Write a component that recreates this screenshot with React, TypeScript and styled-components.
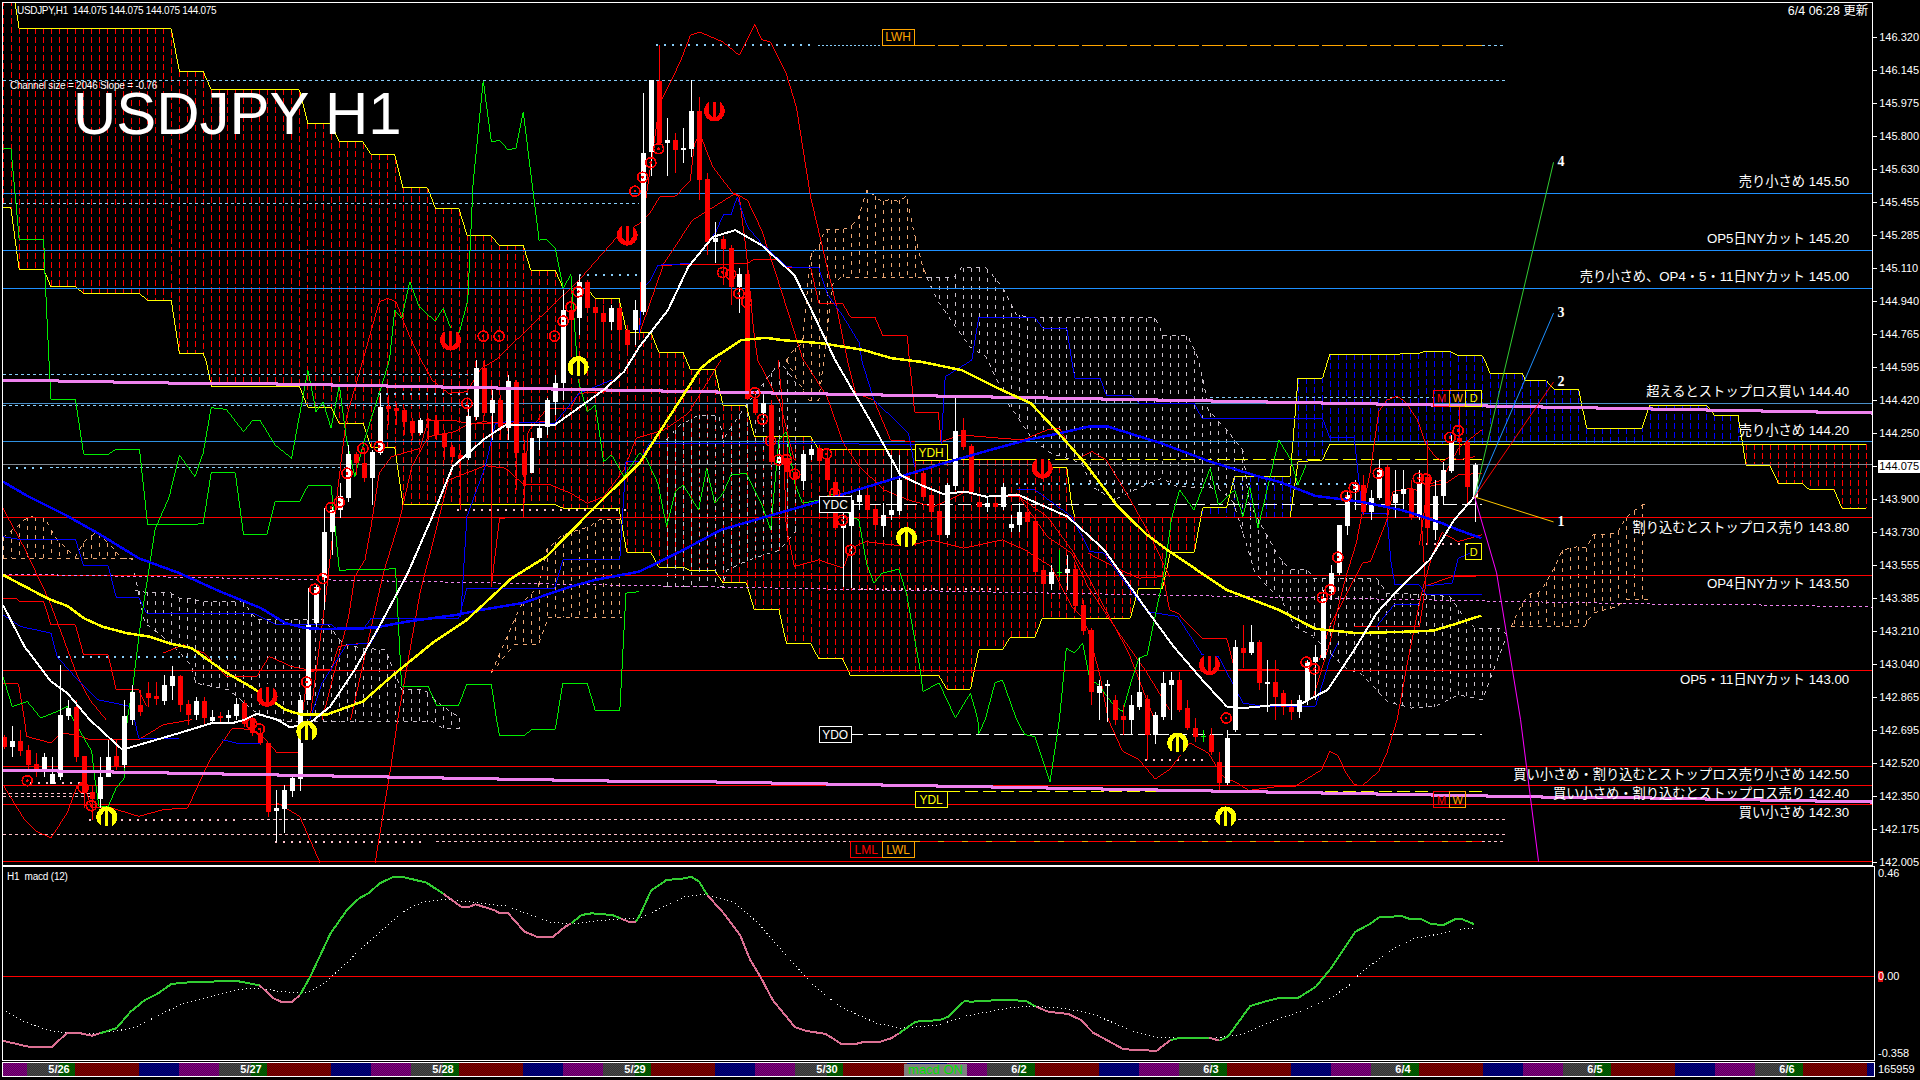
import React from 'react';
import styled, { createGlobalStyle } from 'styled-components';

type Pt = [number, number];
type Candle = [number, number, number, number, 'w' | 'r' | 'g'];

// traced from 640x360 tiles of the chart, tile px are 2.45x wide and 3x tall
const tile = (col: number, row: number, v: number[]): Pt[] => {
  const out: Pt[] = [];
  for (let i = 0; i < v.length; i += 2) {
    out.push([col * 640 + v[i] / 2.45, row * 360 + v[i + 1] / 3]);
  }
  return out;
};
const toPath = (pts: Pt[]) =>
  pts.map((p, i) => `${i ? 'L' : 'M'}${p[0].toFixed(1)} ${p[1].toFixed(1)}`).join('');
const yAt = (pts: Pt[], x: number) => {
  if (x <= pts[0][0]) return pts[0][1];
  for (let i = 1; i < pts.length; i++) {
    if (x <= pts[i][0] && pts[i][0] > pts[i - 1][0]) {
      const k = (x - pts[i - 1][0]) / (pts[i][0] - pts[i - 1][0]);
      return pts[i - 1][1] + k * (pts[i][1] - pts[i - 1][1]);
    }
  }
  return pts[pts.length - 1][1];
};
const barXs = (from: number, to: number) => {
  const xs: number[] = [];
  for (let x = 4; x <= 1868; x += 8) if (x >= from && x <= to) xs.push(x);
  return xs;
};
const stairs = (y0: number, y1: number) => {
  const pts: Pt[] = [];
  for (let x = 3, i = 0; x < 1874; x += 55, i++) {
    const y = y0 + ((y1 - y0) * x) / 1871;
    pts.push([x, y], [x + 55, y]);
  }
  return pts;
};

const w = (a: number, b: number, c = a - 5, d = b + 5): Candle => [a, b, c, d, 'w'];
const r = (a: number, b: number, c = a - 5, d = b + 5): Candle => [a, b, c, d, 'r'];
const g = (a: number, c: number, d: number): Candle => [a, a + 1, c, d, 'g'];

const CANDLES: Candle[] = [
  r(737,747,735,749),w(741,747,726,757),r(741,751,730,756),r(750,765,745,770),r(764,769,753,777),w(757,769,753,777),w(774,784,757,784),w(715,777,665,780),
  w(708,716,700,720),r(707,757,700,762),r(756,793,756,808),r(792,799,785,820),w(777,799,757,808),w(757,777,740,777),r(756,767,740,770),w(716,765,700,768),
  w(692,720,685,725),r(705,712,690,716),r(693,698,682,707),r(696,699,682,705),w(685,701,675,705),w(676,686,666,700),r(676,705,675,712),r(704,715,700,725),
  w(701,715,697,720),r(701,718,697,725),w(717,721,710,724),r(716,718,712,722),w(715,718,710,722),w(704,716,698,720),r(703,724,700,727),r(718,733,715,736),
  r(733,743,728,745),r(743,812,743,817),w(808,811,790,842),w(790,809,785,833),w(778,791,776,797),w(700,779,695,791),w(625,700,588,700),w(587,623,585,628),
  w(532,578,508,610),w(510,532,507,555),w(496,510,483,518),w(454,498,445,502),r(454,463,452,475),r(463,478,448,482),w(452,478,450,505),w(407,453,393,455),
  r(406,409,395,425),r(408,411,403,425),r(410,422,408,435),r(421,433,418,440),w(420,433,418,435),r(419,421,418,440),r(421,435,415,440),r(434,447,430,460),
  r(447,457,445,462),r(455,459,450,510),w(416,458,405,460),w(368,417,360,420),r(368,413,360,416),w(400,413,390,440),r(400,427,395,440),w(381,428,375,440),
  r(382,453,380,490),r(453,475,440,500),w(438,473,435,483),w(428,438,425,450),w(400,427,398,435),w(383,402,375,415),w(310,383,290,400),r(310,320,300,355),
  w(282,318,275,335),r(282,308,280,310),r(307,313,300,340),r(313,322,305,345),w(308,322,305,330),r(308,330,305,345),r(330,345,325,355),w(310,330,300,345),
  w(153,312,93,315),w(80,152,80,176),r(81,143,45,145),w(140,143,118,176),r(140,150,133,173),w(148,150,128,163),w(111,149,80,157),r(111,180,97,200),
  r(179,242,173,255),w(238,242,222,263),r(239,249,236,285),r(248,287,245,305),w(274,287,268,313),r(274,399,270,400),r(399,413,395,415),w(403,413,395,427),
  r(405,462,400,465),w(457,463,450,470),r(458,472,450,475),r(472,478,465,490),w(454,481,450,490),w(449,455,445,460),r(448,461,445,470),r(458,480,455,490),
  r(482,528,478,530),w(525,528,512,587),w(500,526,495,588),w(495,502,490,510),r(495,510,490,515),r(509,525,505,530),w(515,526,503,537),w(510,515,455,520),
  w(480,511,455,515),r(476,480,465,500),r(472,474,460,490),r(473,497,470,500),r(495,512,490,520),r(511,535,490,585),w(485,535,483,538),w(431,486,397,490),
  r(430,447,418,450),r(446,492,444,495),r(502,507,495,525),w(503,507,498,512),r(503,507,498,512),w(487,507,483,510),w(524,528,515,532),w(512,525,503,532),
  r(512,522,502,532),r(521,572,518,575),r(570,584,565,615),w(572,584,565,590),g(572,550,577),w(569,573,555,590),r(569,606,565,610),r(605,631,600,635),
  r(630,692,628,705),w(686,693,680,720),w(684,686,680,722),r(700,720,695,725),r(716,720,705,735),w(705,720,695,735),w(692,707,658,710),r(699,735,695,760),
  w(715,735,712,744),w(683,717,672,720),w(680,685,672,720),r(680,710,672,712),r(708,728,700,730),r(728,737,718,742),g(736,730,742),r(735,752,728,755),
  r(762,783,752,792),w(738,783,730,785),w(647,730,640,732),r(648,653,625,668),w(642,653,625,655),r(642,683,640,690),w(682,684,660,712),r(682,697,660,720),
  r(693,707,690,715),r(707,712,700,720),w(700,712,695,718),w(662,700,660,705),w(657,662,645,700),w(598,658,590,660),w(573,592,565,600),w(525,573,525,575),
  w(495,526,490,535),w(485,490,480,510),r(485,512,475,515),w(498,512,490,520),w(470,498,460,500),r(467,506,465,520),w(494,503,470,518),w(489,494,470,510),
  r(489,517,480,520),w(482,517,470,520),r(477,528,440,545),w(496,530,480,540),w(470,496,462,505),w(442,471,435,473),r(438,442,405,455),r(442,487,440,505),
  w(465,497,463,522),
];

const SPAN_U: Pt[] = [
  ...tile(0,0,[36,0,47,85,420,85,440,213,498,213,518,268,734,268,755,370,812,370,832,425,890,425,910,463,968,463,988,562,1048,562,1068,625,1126,625,1146,706,1204,706,1224,736,1283,736,1302,811,1362,811,1381,865,1440,865,1459,895,1518,895,1537,997,1568,997]),
  ...tile(1,0,[28,997,48,1057,107,1057,115,1080]),
  ...tile(1,1,[125,28,185,28,205,135,262,135,282,230,420,230,440,270,735,270,755,300,975,300,990,322,1048,322,1060,435,1068,472,1568,472]),
  ...tile(2,1,[28,472,47,305,107,300,125,253,1440,253]),
];
const SPAN_L: Pt[] = [
  ...tile(0,0,[7,622,27,622,47,808,107,808,125,860,185,860,205,880,342,880,362,901,420,901,440,1060,498,1060,505,1080]),
  ...tile(0,1,[518,78,734,78,755,142,812,142,832,190,890,190,910,262,968,262,988,435,1362,435,1381,445,1518,445,1537,577,1568,577]),
  ...tile(1,1,[28,577,47,622,107,622,125,632,185,632,205,668,262,668,282,750,342,750,361,852,420,852,440,897,498,897,518,948,734,948,754,988,812,988,832,870,890,870,910,832,970,832,988,775,1204,775,1224,685,1283,685,1302,577,1361,577,1381,443,1440,443,1459,349,1568,349]),
  ...tile(2,1,[28,349,47,55,107,55]),
  ...tile(2,0,[125,1063,270,1063,345,1060,355,1055,420,1055,440,1067,498,1067,505,1080]),
  ...tile(2,1,[518,40,597,40,605,62,656,62,675,87,735,87,755,205,890,205,910,135,1048,135,1068,165,1126,165,1146,318,1205,318,1225,370,1283,370,1302,390,1362,390,1381,445,1440,445]),
];

const PEACH = '#eca673';
const PALE = '#c9bfc9';
const SOFT_CLOUDS: { top: Pt[]; bottom: Pt[]; color: string }[] = [
  { color: PEACH,
    top: tile(0,1,[7,535,40,500,70,470,110,475,140,540,185,590,210,540,240,515,265,550,300,595,325,600]),
    bottom: tile(0,1,[7,595,325,595]) },
  { color: PALE,
    top: tile(0,1,[330,690,355,697,415,697,440,715,475,717,490,725,595,725,630,780,795,780,840,850,885,865,945,870,985,990,1040,990,1085,1040,1130,1075]),
    bottom: tile(0,1,[330,640,355,790,420,850,470,920,480,970,560,990,630,1060,700,1085,850,1085,945,1085,985,1085,1060,1085,1085,1105,1130,1105]) },
  { color: PEACH,
    top: tile(0,1,[1205,940,1240,840,1280,730,1320,680,1340,570,1380,525,1445,500,1470,480,1525,480]),
    bottom: tile(0,1,[1205,940,1260,855,1320,855,1345,772,1525,772]) },
  { color: PALE,
    top: tile(1,1,[65,240,100,195,145,165,195,168,205,240,262,135,345,5,385,70]),
    bottom: tile(1,1,[65,680,205,680,215,630,270,600,345,570,385,510]) },
  { color: PEACH,
    top: tile(1,0,[360,1080,385,1040,400,1030,420,760,440,742,455,688,500,688,515,680,535,660,558,568,575,585,595,605,615,598,635,603,655,588,672,690,695,800,705,832]),
    bottom: tile(1,0,[360,1080,415,1200,440,1200,475,850,495,832,705,832]) },
  { color: PALE,
    top: [...tile(1,0,[705,832,770,832,790,803,850,803,870,830,890,860,925,945,970,953,1265,953,1285,1007,1345,1007,1370,1075]),
      ...tile(1,1,[1385,75,1395,150,1440,210,1480,270,1495,430,1568,590])],
    bottom: [...tile(1,0,[705,832,730,900,810,1040,850,1070]),
      ...tile(1,1,[900,120,965,240,1010,280,1085,310,1110,380,1165,420,1205,395,1280,355,1320,380,1420,385,1455,425,1470,480,1510,640,1560,705])] },
  { color: PALE,
    top: tile(2,1,[0,590,28,630,70,630,85,655,240,655,265,700,340,703,420,710,450,765,480,805,540,805,560,825]),
    bottom: tile(2,1,[0,705,40,800,85,830,125,880,165,925,205,945,265,1025,325,1045,385,1040,440,1005,500,1020,530,920,560,825]) },
  { color: PEACH,
    top: tile(2,1,[570,800,597,730,615,702,635,702,655,670,675,625,695,570,735,560,755,565,770,525,830,520,850,475,890,435,910,430]),
    bottom: tile(2,1,[570,800,750,800,770,760,830,740,850,720,910,718]) },
];

const THIN_RED: Pt[][] = [
  [...tile(0,1,[760,1080,800,700,830,370,850,170,890,0]),...tile(0,0,[930,905,950,895,972,905,985,950,1005,1010,1030,1075]),...tile(0,1,[1060,60,1100,100,1145,95,1180,25,1215,0]),...tile(0,0,[1420,840,1510,715,1568,670]),...tile(1,0,[25,640,50,590,90,587,125,540,135,430,148,400,180,500,230,580,245,590,262,750,280,990,290,1080]),...tile(1,1,[345,130,380,300])],
  [...tile(1,0,[0,1020,8,660,50,310,100,185,125,105,148,95,205,125,245,165,283,72,300,118,322,125,360,220,385,320,420,590,460,800,480,900,510,1080]),...tile(1,1,[530,100,575,120,616,240,675,245])],
  [...tile(1,0,[0,1000,60,790,130,660,235,580,265,600,300,690,345,860,400,1075]),...tile(1,1,[460,110,500,250,540,320,600,390,660,420,720,440,760,420,800,395,850,410,930,410,1000,470,1060,570,1100,650,1200,880,1260,1070])],
  [...tile(1,0,[48,795,195,793,265,790,280,778,340,778,362,802,420,802,440,910,498,910,518,952,578,952,597,1007,657,1007,662,1080]),...tile(1,1,[675,157,733,157,740,245,790,225,940,240,1000,210,1030,205,1060,270])],
  [...tile(1,1,[340,0,350,120,360,500,380,620,440,600,500,625,518,565,555,545,655,560,715,540,795,565,890,540,945,570,1010,620,1060,740,1085,770,1100,810,1130,950,1150,1080]),...tile(1,2,[1185,95,1225,120,1265,178,1300,150,1350,70,1395,100,1430,170,1465,190,1495,212,1568,200]),...tile(2,2,[40,200,105,150,125,95,145,108,165,160,185,195,205,198,245,155,265,100,290,0]),...tile(2,1,[320,880,350,700,375,590,400,518,440,545,497,525])],
  tile(0,1,[7,445,60,565,120,720,175,900,190,950,220,1020,260,1080]),
  tile(0,1,[7,715,40,715,47,725,107,725,125,795,185,795,205,885,265,885,285,990,340,990,360,1040]),
  [...tile(0,1,[7,972,45,972,60,1080]),...tile(0,2,[65,50,125,70,150,40,185,45,220,60,340,60,400,15,470,0])],
  [...tile(0,2,[7,195,60,300,90,335,125,355,165,280,190,195,205,195,225,265,265,262,340,290,400,270,460,265,515,120,570,25,620,30,640,45,680,100,735,100,740,0]),...tile(0,1,[755,935,812,930,830,860,890,850])],
  tile(0,2,[680,250,735,290,785,430]),
  [...tile(0,2,[920,430,960,130,975,0]),...tile(0,1,[1030,700,1100,360,1190,317,1240,325,1285,375,1350,375,1400,400,1440,430,1480,410,1530,330,1560,235]),...tile(1,1,[60,210,120,160,200,0])],
  tile(0,1,[790,1080,855,770,870,650,895,600,910,500,930,340,960,290,1030,265,1050,180,1110,180,1145,190,1205,190,1205,680,1225,475,1283,472,1295,215,1342,145,1400,145,1418,100,1490,95,1530,90]),
  tile(0,1,[860,1080,940,640,980,480,1010,320,1050,230,1115,215,1145,195,1185,185,1240,190,1340,185]),
  tile(0,1,[400,880,450,855,500,880,555,950,630,950,660,890,715,920,755,930,812,930]),
  tile(2,1,[100,900,125,800,205,610,225,605,265,480,280,395,325,385,345,395,360,678,345,800,185,800]),
  tile(2,1,[85,1010,125,850,145,745,165,650,190,550,225,330,245,155,265,120,290,108,310,125,340,180,360,250,380,285,400,305,420,290,440,300,480,290]),
  tile(2,1,[345,555,365,380,410,370,440,345,497,340]),
  tile(2,1,[365,375,400,360,440,265,497,210]),
  tile(2,1,[360,678,425,650,497,648]),
  tile(1,1,[1100,580,1180,630,1225,655,1285,650,1300,750,1320,760,1380,835,1440,835,1460,930,1568,930]),
  tile(1,1,[1085,290,1110,275,1145,300,1190,390,1250,520,1300,650]),
  tile(1,1,[925,400,1000,530,1060,580,1100,680,1170,810,1240,930,1300,1050]),
];
const THIN_BLUE: Pt[][] = [
  [...tile(0,1,[7,530,45,538,185,538,205,618,265,618,285,712,340,712,360,760,620,760,675,793,810,793,830,810,890,810,910,775,1125,775,1145,685,1360,685,1381,598,1520,598,1535,305,1568,305]),...tile(1,1,[25,250,740,253,750,50,815,0]),...tile(1,0,[832,952,970,952,990,985,1048,985,1060,1080]),...tile(1,1,[1068,55,1130,55,1145,105,1205,105,1225,130,1360,130,1380,175,1568,175]),...tile(2,1,[107,175,125,233,185,233,205,460,265,460,275,605,285,675,345,675,360,703,497,703])],
  tile(0,1,[7,765,50,800,125,820,140,890,190,960,240,1020,320,1040,330,1080]),
  tile(0,1,[760,1080,790,970,850,855,910,850,940,780]),
  tile(0,1,[1130,770,1145,470,1190,320,1215,190,1245,185,1360,190,1420,100,1440,90,1500,60]),
  [...tile(1,0,[0,1000,8,860,25,845,45,795,125,790,185,700,205,643,225,643,240,590,265,680,300,730,340,775,362,800,440,803,460,880,500,950,540,1030,545,1080]),...tile(1,1,[575,120,635,190,660,220,675,320])],
  [...tile(1,1,[925,390,970,390,1060,470,1105,575,1140,580,1180,650,1245,755,1320,770,1380,885,1420,890,1480,1030,1530,1040]),...tile(2,1,[90,1040,125,900,145,850])],
  tile(2,1,[240,800,265,760,285,733,345,733]),
  tile(2,1,[360,678,425,670,440,595,470,580]),
  tile(0,2,[330,0,340,55,440,55]),
  tile(0,2,[545,60,580,70,640,70,640,40]),
];
const CHIKOU: Pt[] = [
  ...tile(0,1,[7,950,30,1040,67,1025,100,1075,150,1050,165,1040,180,1080]),
  ...tile(0,2,[225,95,233,180,243,262,265,262,285,205,305,175,312,0]),
  ...tile(0,1,[325,985,345,790,380,510,415,410,440,285,478,350,498,280,518,143,555,148,597,215,620,180,637,180,675,255,715,295,755,30,775,155,792,125,812,205,832,75,850,240,870,350,895,235,930,100,955,0]),
  ...tile(0,0,[968,930,985,955,1005,845,1028,920,1067,963,1087,925,1110,1000,1127,995,1147,900,1160,550,1185,241,1205,425,1225,420,1245,448,1265,445,1283,335,1310,600,1322,720,1340,717,1362,745,1381,865,1400,823,1415,1080]),
  ...tile(0,1,[1420,70,1440,155,1460,135,1480,305,1500,285,1530,350,1568,280]),
  ...tile(1,1,[15,290,45,370,67,500,88,395,107,375,125,410,145,450,165,325,185,430,205,400,225,345,262,340,302,440,322,510,342,240,361,215,381,370,400,430,440,420,479,400,518,470,538,480,557,610,575,670,595,640,636,628,655,700,690,940,695,995,735,970,775,1075,812,1000,830,1080]),
  ...tile(1,2,[832,42,848,0]),
  ...tile(1,1,[872,970,890,960,925,1080]),
  ...tile(1,2,[945,45,970,50,1007,187,1030,0]),
  ...tile(1,1,[1047,865,1067,880,1087,850,1105,960,1126,975,1165,1040,1185,1055,1205,970,1225,895,1245,885,1285,650,1305,475,1325,390,1360,450,1400,325,1420,435,1460,390,1480,470,1497,380,1517,505,1568,240]),
  ...tile(2,1,[30,300,47,375,67,315]),
];
const CHIKOU_STEP: Pt[] = [
  ...tile(0,0,[7,445,27,445,47,718,107,718,112,870,120,1080]),
  ...tile(0,1,[125,118,185,118,205,283,265,283,285,268,342,268,362,495,498,492,518,338,577,338,597,523,655,523,675,424,735,424,755,378,812,378,832,631,970,627,985,980,1050,980,1070,1036,1125,1036,1145,973,1205,973,1218,1080]),
  ...tile(0,2,[1225,48,1285,48,1305,28,1362,28]),
  ...tile(0,1,[1380,970,1440,970,1460,1053,1520,1053,1535,700,1568,695]),
];
const MA_BLUE: Pt[] = [
  ...tile(0,1,[7,365,70,410,160,465,240,520,340,595,440,640,540,695,640,745,700,790,750,805,800,808,920,803,1000,785,1120,765,1180,750,1280,730,1400,680,1460,660,1568,635]),
  ...tile(1,1,[100,575,200,510,340,460,440,425,560,380,640,350,740,312,860,270,950,240,1030,220,1100,200,1150,200,1280,250,1400,305,1520,350,1568,365]),
  ...tile(2,1,[90,408,200,425,300,450,340,465,400,490,440,510,497,535]),
];
const MA_YELLOW: Pt[] = [
  ...tile(0,1,[7,645,120,718,165,738,205,775,250,800,310,820,365,830,420,852,470,865,550,935,620,985,700,1050,740,1065,800,1065,890,1025,960,950,1060,850,1145,780,1255,655,1340,590,1460,440,1568,310]),
  ...tile(1,1,[150,25]),
  ...tile(1,0,[175,1080,250,1020,310,1013,350,1020,450,1030,550,1050,620,1075]),
  ...tile(1,1,[690,5,790,30,880,85,960,130,1010,195,1090,305,1170,435,1240,520,1300,575,1440,690,1568,750]),
  ...tile(2,1,[90,807,190,820,330,815,380,812,440,790,497,767]),
];
const MA_WHITE: Pt[] = [
  ...tile(0,1,[7,735,60,860,125,965,165,1000,220,1080]),
  ...tile(0,2,[300,90,370,65,440,40,520,10,570,10,600,0]),
  ...tile(0,1,[630,1062,680,1080]),
  ...tile(0,2,[710,22,755,15]),
  ...tile(0,1,[810,1040,870,930,930,800,1000,640,1060,470,1110,320,1190,235,1240,195,1360,195,1480,90,1530,35]),
  ...tile(1,0,[0,1040,70,930,120,800,180,710,235,690,300,735,380,825,430,950,480,1080]),
  ...tile(1,1,[570,190,640,345,690,375,745,402,800,395,850,410,930,405,1050,470,1140,570,1250,760,1310,860,1380,960,1440,1040,1480,1045,1568,1035]),
  ...tile(2,1,[50,1035,120,990,180,880,240,760,300,680,370,600,430,480,480,410]),
];

const MACD_RUNS: { color: string; pts: Pt[] }[] = [
  { color: '#db7093', pts: tile(0,2,[6,962,70,980,128,980,165,938,190,938,225,947,245,940]) },
  { color: '#32cd32', pts: tile(0,2,[245,940,285,925,320,875,355,840,385,822,420,792,470,786,580,783,636,796]) },
  { color: '#db7093', pts: tile(0,2,[636,796,670,835,690,846,715,846,735,825]) },
  { color: '#32cd32', pts: tile(0,2,[735,825,760,770,810,640,850,570,880,535,905,518,930,490,965,470,985,470,1045,488,1087,522]) },
  { color: '#db7093', pts: tile(0,2,[1087,522,1130,560,1150,560,1165,553,1210,570,1225,580,1245,580,1285,635,1315,650,1355,650,1385,620,1400,610]) },
  { color: '#32cd32', pts: tile(0,2,[1400,610,1425,585,1450,580,1500,585,1520,595]) },
  { color: '#db7093', pts: tile(0,2,[1520,595,1540,605,1558,605]) },
  { color: '#32cd32', pts: [...tile(0,2,[1558,605]),...tile(1,2,[0,585,27,512,65,480,110,475,125,470,145,485,165,525])] },
  { color: '#db7093', pts: tile(1,2,[165,525,205,580,245,645,270,720,295,770,325,840,380,922,405,932,455,942,495,973,525,973,545,967,585,967,615,955,635,940]) },
  { color: '#32cd32', pts: tile(1,2,[635,940,675,905,735,900,755,890,795,843,810,845,880,840,945,842,970,860]) },
  { color: '#db7093', pts: tile(1,2,[970,860,1000,875,1050,882,1080,900,1110,938,1185,988,1230,990,1265,993,1300,960]) },
  { color: '#32cd32', pts: tile(1,2,[1300,960,1325,953,1395,953]) },
  { color: '#db7093', pts: tile(1,2,[1395,953,1420,962]) },
  { color: '#32cd32', pts: [...tile(1,2,[1420,962,1440,950,1495,858,1530,845]),...tile(2,2,[0,833,45,833,88,800,125,745,185,635,220,612,245,590,275,590,295,587,318,597,345,597,370,612,400,615,430,597,445,597,475,612])] },
];
const MACD_SIGNAL: Pt[] = [
  ...tile(0,2,[6,868,60,905,115,930,160,938,240,940,290,932,335,920,390,885,440,855,530,825,590,808,635,805,690,815,750,818,790,795,835,745,890,680,965,600,1000,565,1040,545,1090,538,1240,558,1300,585,1350,607,1400,612,1500,598]),
  ...tile(1,2,[0,595,50,565,110,530,160,523,230,547,290,610,360,710,425,795,490,860,580,910,640,925,730,915,800,888,900,865,950,858,1040,865,1110,882,1200,930,1270,953,1400,955,1470,945]),
  ...tile(2,2,[0,895,50,875,130,830,170,795,200,755,280,685,330,655,400,640,450,625,480,625]),
];

const RINGS: Pt[] = [
  ...tile(0,1,[752,967,772,688,792,656,812,443,832,427,851,340,890,265,930,260,1145,130]),
  ...tile(0,0,[1381,963,1400,921,1418,875,1360,1008,1185,1008,1224,1008,1557,573]),
  ...tile(1,0,[8,531,28,487,47,445,204,817,224,822,244,880,263,906]),
  ...tile(1,1,[283,98,302,178,322,243,342,300,361,300,381,343,459,282,479,400,498,481,518,571,1439,1075]),
  ...tile(0,2,[67,183,204,204,224,258,636,28,617,12]),
  ...tile(2,1,[67,907,87,927,107,713,126,690,145,592,165,408,185,383,244,340,342,355,361,357,420,232,440,212]),
];
const SELL_SIGNS: Pt[] = [
  ...tile(0,0,[1105,1020,1538,705]),...tile(1,0,[184,332]),...tile(0,1,[655,1010]),...tile(1,1,[988,325,1398,915]),
];
const BUY_SIGNS: Pt[] = [
  ...tile(0,1,[1418,20]),...tile(1,1,[655,533]),...tile(0,2,[262,292,752,35]),...tile(1,2,[1320,70,1438,292]),
];

const LEVELS: [number, string][] = [
  [193, '#1e90ff'], [250, '#1e90ff'], [288, '#1e90ff'], [403, '#4a8fc8'], [442, '#2f90e0'], [465, '#808890'],
  [518, '#ff0000'], [576, '#ff0000'], [671, '#ff0000'], [767, '#ff0000'], [786, '#ff0000'], [805, '#ff0000'], [862, '#ff0000'],
];
const SKY = '#87cefa';
const PINK = '#ffc0cb';
const DOTS = '2 6';
const FINE = '3 3';
const LONG = '13 5';
const GUIDES: [number, number, number, string, string][] = [
  [657, 811, 45, SKY, DOTS], [819, 883, 45, SKY, '2 2'], [915, 1483, 45, '#ffa500', '21 3'], [1483, 1506, 45, SKY, FINE],
  [3, 1506, 80, SKY, FINE], [3, 640, 193, SKY, FINE], [3, 640, 203, SKY, FINE], [580, 640, 275, SKY, DOTS],
  [3, 473, 374, SKY, FINE], [3, 473, 405, SKY, FINE], [378, 473, 394, SKY, DOTS], [8, 45, 468, SKY, DOTS], [50, 345, 468, SKY, FINE],
  [58, 237, 657, SKY, DOTS], [1017, 1358, 484, SKY, DOTS], [1211, 1435, 397, SKY, FINE],
  [457, 628, 510, PINK, DOTS], [89, 235, 820, PINK, DOTS], [243, 1506, 820, PINK, FINE], [3, 1506, 835, PINK, FINE],
  [275, 425, 842, PINK, DOTS], [436, 851, 842, PINK, FINE], [1483, 1506, 842, PINK, FINE],
  [3, 90, 794, PINK, FINE], [3, 90, 797, PINK, FINE], [30, 80, 783, PINK, DOTS],
  [1146, 1207, 760, PINK, DOTS], [854, 1003, 589, PINK, DOTS], [1427, 1472, 544, PINK, DOTS],
  [948, 1483, 460, '#ffff00', LONG], [851, 1483, 505, '#ffffff', LONG], [851, 1483, 735, '#ffffff', LONG], [948, 1483, 792, '#ffff00', LONG],
];
const TAGS: [string, number, number, number, string][] = [
  ['LWH', 883, 29, 32, '#ffa500'], ['YDH', 916, 445, 32, '#ffff00'], ['YDC', 820, 497, 32, '#ffffff'], ['YDO', 820, 727, 32, '#ffffff'],
  ['YDL', 916, 792, 32, '#ffff00'], ['LML', 851, 842, 32, '#ff0000'], ['LWL', 883, 842, 32, '#ffa500'],
  ['M', 1435, 390, 16, '#ff0000'], ['W', 1451, 390, 16, '#ffa500'], ['D', 1467, 390, 16, '#ffff00'], ['D', 1467, 544, 16, '#ffff00'],
  ['M', 1435, 792, 16, '#ff0000'], ['W', 1451, 792, 16, '#ffa500'],
];
const NOTES: [string, number][] = [
  ['売り小さめ 145.50', 182], ['OP5日NYカット 145.20', 239], ['売り小さめ、OP4・5・11日NYカット 145.00', 277],
  ['超えるとストップロス買い 144.40', 392], ['売り小さめ 144.20', 431], ['割り込むとストップロス売り 143.80', 528],
  ['OP4日NYカット 143.50', 584], ['OP5・11日NYカット 143.00', 680], ['買い小さめ・割り込むとストップロス売り小さめ 142.50', 775],
  ['買い小さめ・割り込むとストップロス売り 142.40', 794], ['買い小さめ 142.30', 813],
];
const PROJECTIONS: [string, string, number][] = [
  ['4', '#32cd32', 162], ['3', '#1e90ff', 313], ['2', '#ff0000', 382], ['1', '#ffc800', 522],
];
const FALL: Pt[] = [[1476, 497], [1498, 573], [1522, 720], [1540, 862]];
const PRICES = ['146.320','146.145','145.975','145.800','145.630','145.455','145.285','145.110','144.940','144.765','144.595','144.420','144.250','144.075','143.900','143.730','143.555','143.385','143.210','143.040','142.865','142.695','142.520','142.350','142.175','142.005'];
const LAST_PRICE = '144.075';
const DAYS = ['5/26', '5/27', '5/28', '5/29', '5/30', '6/2', '6/3', '6/4', '6/5', '6/6'];

const GlobalStyle = createGlobalStyle`
  html, body { margin: 0; padding: 0; background: #000; }
`;

const Screen = styled.div`
  width: 1920px;
  height: 1080px;
  box-sizing: border-box;
  padding: 2px 0 0 2px;
  background: #000;
  color: #fff;
  font-family: "Liberation Sans", "Noto Sans CJK JP", sans-serif;
  display: flex;
  flex-direction: column;
  overflow: hidden;
`;
const Row = styled.div<{ $height: number }>`
  display: flex;
  height: ${p => p.$height}px;
  flex: none;
`;
const Pane = styled.div`
  width: 1873px;
  box-sizing: border-box;
  border: 1px solid #fff;
  overflow: hidden;
`;
const Plot = styled.svg`
  display: block;
  width: 100%;
  height: 100%;
  shape-rendering: crispEdges;
`;
const ChartText = styled.text<{ $size: number; $track?: number }>`
  font-family: "Liberation Sans", "Noto Sans CJK JP", sans-serif;
  font-size: ${p => p.$size}px;
  letter-spacing: ${p => p.$track ?? 0}px;
  fill: #fff;
  white-space: pre;
`;
const TagText = styled(ChartText)`
  text-anchor: middle;
`;
const NoteText = styled(ChartText)`
  text-anchor: end;
`;
const WaveNumber = styled.text`
  font-family: "Liberation Serif", serif;
  font-weight: 700;
  font-size: 14px;
  fill: #fff;
`;
const PriceAxis = styled.div`
  flex: 1;
  padding-top: 18.5px;
  font-size: 11px;
`;
const PriceTick = styled.div`
  height: 33px;
  display: flex;
  align-items: center;
  gap: 1px;
  &::before {
    content: '';
    width: 4px;
    height: 1px;
    background: #fff;
  }
`;
const PriceValue = styled.span<{ $current?: boolean }>`
  padding: 0 1px;
  line-height: 13px;
  background: ${p => (p.$current ? '#fff' : 'transparent')};
  color: ${p => (p.$current ? '#000' : '#fff')};
`;
const MacdAxis = styled.div`
  flex: 1;
  padding-left: 3px;
  font-size: 11px;
`;
const MacdValue = styled.div<{ $gap: number; $zero?: boolean }>`
  height: 14px;
  line-height: 14px;
  margin-top: ${p => p.$gap}px;
  background: ${p => (p.$zero ? 'linear-gradient(#e01010, #e01010) 0 center / 5px 11px no-repeat' : 'none')};
`;
const TimeRow = styled.div`
  margin-top: 1px;
  height: 15px;
  flex: none;
  display: flex;
  position: relative;
`;
const TimeStrip = styled.div`
  width: 1873px;
  box-sizing: border-box;
  border: 1px solid #fff;
  display: flex;
  overflow: hidden;
`;
const weave = 'conic-gradient(rgba(0,0,0,.28) 25%, transparent 0 50%, rgba(0,0,0,.28) 0 75%, transparent 0) 0 0 / 2px 2px';
const Session = styled.div<{ $width: number; $color: string }>`
  flex: none;
  width: ${p => p.$width}px;
  background: ${weave}, ${p => p.$color};
`;
const DayCell = styled.div`
  flex: none;
  width: 48px;
  box-sizing: border-box;
  padding-left: 17px;
  text-align: center;
  font-size: 11px;
  font-weight: 700;
  line-height: 13px;
  background: ${weave}, linear-gradient(90deg, #484848 32px, #006400 32px);
`;
const MacdToggle = styled.div`
  position: absolute;
  left: 902px;
  top: 2px;
  width: 63px;
  height: 12px;
  background: #808080;
  color: #00e000;
  font-size: 13px;
  line-height: 12px;
  text-align: center;
`;
const BarCount = styled.div`
  padding-left: 3px;
  font-size: 11px;
  line-height: 15px;
`;

function Signal({ at, color, flip }: { at: Pt; color: string; flip?: boolean }) {
  return (
    <g transform={`translate(${at[0]} ${at[1]}) rotate(${flip ? 180 : 0})`}>
      <ellipse rx={10.5} ry={10.5} fill={color} />
      <path d="M-5.5 -12H5.5V2L2 6H-2L-5.5 2Z" fill="#000" />
      <rect x={-1.5} y={-9} width={3} height={16} fill={color} />
    </g>
  );
}

function Tag({ text, x, y, width, color }: { text: string; x: number; y: number; width: number; color: string }) {
  return (
    <g>
      <rect x={x} y={y} width={width} height={16} fill="#000" fillOpacity={width > 20 ? 1 : 0} stroke={color} />
      <TagText $size={width > 20 ? 12 : 11} x={x + width / 2} y={y + 12} style={{ fill: color }}>
        {text}
      </TagText>
    </g>
  );
}

function Kumo() {
  const xs = barXs(4, 1868);
  let red = '';
  let blue = '';
  xs.forEach(x => {
    const u = yAt(SPAN_U, x);
    const l = yAt(SPAN_L, x);
    if (u < l) red += `M${x} ${u.toFixed(0)}V${l.toFixed(0)}`;
    else if (l < u) blue += `M${x} ${l.toFixed(0)}V${u.toFixed(0)}`;
  });
  return (
    <g fill="none">
      <path d={red} stroke="#ff0000" strokeDasharray="6 3" />
      <path d={blue} stroke="#0000ff" strokeDasharray="6 3" />
      <path d={toPath(SPAN_U)} stroke="#ffff00" />
      <path d={toPath(SPAN_L)} stroke="#ffff00" />
    </g>
  );
}

function SoftClouds() {
  return (
    <g fill="none">
      {SOFT_CLOUDS.map((c, i) => {
        const from = Math.max(c.top[0][0], c.bottom[0][0]);
        const to = Math.min(c.top[c.top.length - 1][0], c.bottom[c.bottom.length - 1][0]);
        const hatch = barXs(from, to)
          .map(x => `M${x} ${yAt(c.top, x).toFixed(0)}V${yAt(c.bottom, x).toFixed(0)}`)
          .join('');
        return (
          <g key={i} stroke={c.color} strokeDasharray="4 5">
            <path d={hatch} />
            <path d={toPath(c.top)} />
            <path d={toPath(c.bottom)} />
          </g>
        );
      })}
    </g>
  );
}

function Candles() {
  return (
    <g>
      {CANDLES.map((c, i) => {
        const x = 4 + 8 * i;
        const fill = c[4] === 'w' ? '#fff' : c[4] === 'r' ? '#ff0000' : '#00ff00';
        return (
          <g key={i} fill={fill}>
            <rect x={x} y={c[2]} width={1} height={c[3] - c[2]} />
            <rect x={x - 2} y={c[0]} width={5} height={c[1] - c[0]} />
          </g>
        );
      })}
    </g>
  );
}

function MainChart() {
  return (
    <Plot viewBox="3 3 1871 862">
      <Kumo />
      <SoftClouds />
      {GUIDES.map((d, i) => (
        <line key={i} x1={d[0]} x2={d[1]} y1={d[2]} y2={d[2]} stroke={d[3]} strokeDasharray={d[4]} strokeWidth={d[4] === DOTS ? 2 : 1} />
      ))}
      <line x1={915} x2={1483} y1={842} y2={842} stroke="#ff0000" />
      <line x1={915} x2={1483} y1={842} y2={842} stroke="#ffa500" strokeDasharray="6 18" />
      {LEVELS.map(([y, color]) => (
        <line key={y} x1={3} x2={1874} y1={y} y2={y} stroke={color} />
      ))}
      <g fill="none">
        <path d={toPath(stairs(575, 608))} stroke="#ee82ee" strokeDasharray="3 3" />
        {THIN_RED.map((pts, i) => <path key={i} d={toPath(pts)} stroke="#ff0000" />)}
        {THIN_BLUE.map((pts, i) => <path key={i} d={toPath(pts)} stroke="#0000ff" />)}
        <path d={toPath(CHIKOU_STEP)} stroke="#00ee00" />
        <path d={toPath(CHIKOU)} stroke="#00ee00" />
      </g>
      <Candles />
      <g fill="none" strokeLinejoin="round">
        <path d={toPath(stairs(380, 413))} stroke="#ee82ee" strokeWidth={3} />
        <path d={toPath(stairs(771, 803))} stroke="#ee82ee" strokeWidth={3} />
        <path d={toPath(MA_BLUE)} stroke="#0000ff" strokeWidth={2.5} />
        <path d={toPath(MA_YELLOW)} stroke="#ffff00" strokeWidth={2.5} />
        <path d={toPath(MA_WHITE)} stroke="#ffffff" strokeWidth={2} />
        {PROJECTIONS.map(([n, color, y]) => (
          <path key={n} d={`M1476 497L1555 ${y}`} stroke={color} />
        ))}
        <path d={toPath(FALL)} stroke="#ff00ff" />
      </g>
      {RINGS.map((p, i) => (
        <g key={i}>
          <circle cx={p[0]} cy={p[1]} r={5} fill="none" stroke="#ff0000" strokeWidth={1.8} />
          <circle cx={p[0]} cy={p[1]} r={1.4} fill="#ff0000" />
        </g>
      ))}
      {SELL_SIGNS.map((p, i) => <Signal key={i} at={p} color="#ff0000" />)}
      {BUY_SIGNS.map((p, i) => <Signal key={i} at={p} color="#ffff00" flip />)}
      {TAGS.map(([text, x, y, width, color], i) => (
        <Tag key={i} text={text} x={x} y={y} width={width} color={color} />
      ))}
      <ChartText $size={10} $track={-0.3} x={17} y={14}>USDJPY,H1  144.075 144.075 144.075 144.075</ChartText>
      <NoteText $size={12.5} x={1870} y={15}>6/4 06:28 更新</NoteText>
      <ChartText $size={10} $track={-0.2} x={10} y={89}>Channel size = 2046 Slope = -0.76</ChartText>
      <ChartText $size={60} x={73} y={134}>USDJPY H1</ChartText>
      {NOTES.map(([text, y]) => (
        <NoteText key={y} $size={13.3} x={1851} y={y + 4}>{text}</NoteText>
      ))}
      {PROJECTIONS.map(([n, , y]) => (
        <WaveNumber key={n} x={1559} y={y + 4}>{n}</WaveNumber>
      ))}
    </Plot>
  );
}

function MacdChart() {
  return (
    <Plot viewBox="3 867 1871 193">
      <line x1={3} x2={1874} y1={976} y2={976} stroke="#ff0000" />
      <path d={toPath(MACD_SIGNAL)} fill="none" stroke="#fff" strokeDasharray="1 3" />
      <g fill="none" strokeWidth={2}>
        {MACD_RUNS.map((run, i) => <path key={i} d={toPath(run.pts)} stroke={run.color} />)}
      </g>
      <ChartText $size={10} $track={-0.2} x={7} y={880}>H1  macd (12)</ChartText>
    </Plot>
  );
}

function TimeAxis() {
  return (
    <TimeRow>
      <TimeStrip>
        <Session $width={23.5} $color="#800080" />
        {DAYS.map(day => (
          <React.Fragment key={day}>
            <DayCell>{day}</DayCell>
            <Session $width={64} $color="#800000" />
            <Session $width={40} $color="#000080" />
            <Session $width={40} $color="#800080" />
          </React.Fragment>
        ))}
      </TimeStrip>
      <MacdToggle>macd ON</MacdToggle>
      <BarCount>165959</BarCount>
    </TimeRow>
  );
}

export default function App() {
  return (
    <>
      <GlobalStyle />
      <Screen>
        <Row $height={864}>
          <Pane>
            <MainChart />
          </Pane>
          <PriceAxis>
            {PRICES.map(price => (
              <PriceTick key={price}>
                <PriceValue $current={price === LAST_PRICE}>{price}</PriceValue>
              </PriceTick>
            ))}
          </PriceAxis>
        </Row>
        <Row $height={195}>
          <Pane>
            <MacdChart />
          </Pane>
          <MacdAxis>
            <MacdValue $gap={0}>0.46</MacdValue>
            <MacdValue $gap={89} $zero>0.00</MacdValue>
            <MacdValue $gap={63}>-0.358</MacdValue>
          </MacdAxis>
        </Row>
        <TimeAxis />
      </Screen>
    </>
  );
}
